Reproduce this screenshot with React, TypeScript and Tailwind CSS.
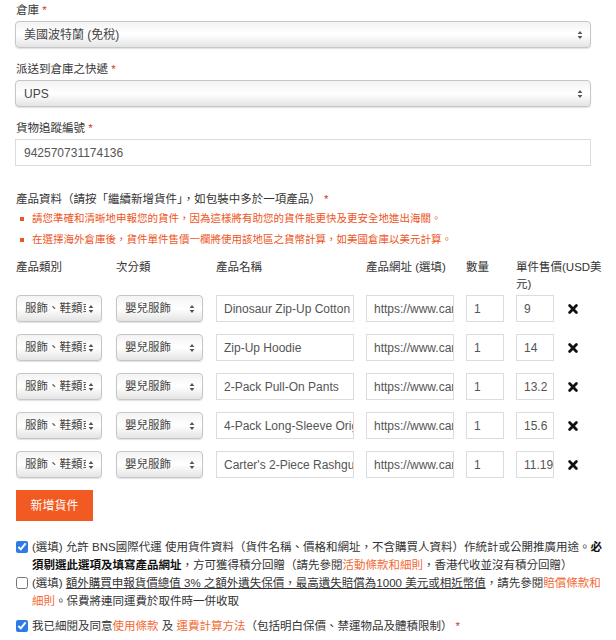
import React from "react";

const Arrows = () => (
  <svg width="6" height="10" viewBox="0 0 6 10" className="absolute right-[7px] top-1/2 -translate-y-1/2">
    <path d="M0.6 4 L3 1 L5.4 4 Z" fill="#555" />
    <path d="M0.6 6 L3 9 L5.4 6 Z" fill="#555" />
  </svg>
);

const Select = ({ text, className }: { text: string; className: string }) => (
  <div
    className={
      "relative h-[27px] rounded-[4px] border border-[#c6c6c6] bg-linear-to-b from-[#f3f3f3] via-white to-[#e4e4e4] shadow-[0_1px_1px_rgba(0,0,0,0.12)] flex items-center pl-[8px] text-[#444] " +
      className
    }
  >
    <span className="block overflow-hidden whitespace-nowrap">{text}</span>
    <Arrows />
  </div>
);

const Input = ({ value, className }: { value: string; className: string }) => (
  <div
    className={
      "h-[27px] border border-[#dcdcdc] bg-white flex items-center pl-[7px] text-[12px] text-[#555] overflow-hidden whitespace-nowrap " +
      className
    }
  >
    {value}
  </div>
);

const Star = () => <span className="text-[#d0392b]">*</span>;

const XIcon = () => (
  <svg width="12" height="12" viewBox="0 0 12 12">
    <path d="M2.6 2.6 L9.4 9.4 M9.4 2.6 L2.6 9.4" stroke="#111" strokeWidth="2.8" strokeLinecap="round" />
  </svg>
);

const rows = [
  ["Dinosaur Zip-Up Cotton Sleep & Play", "9"],
  ["Zip-Up Hoodie", "14"],
  ["2-Pack Pull-On Pants", "13.2"],
  ["4-Pack Long-Sleeve Original Bodysuits", "15.6"],
  ["Carter's 2-Piece Rashguard Set", "11.19"],
];

export default function App() {
  return (
    <div className="w-[616px] h-[640px] overflow-hidden bg-white pl-[15px] pt-[1px] font-['Liberation_Sans','Noto_Sans_CJK_TC',sans-serif] text-[#333] text-[11.5px]">
      <div className="w-[576px]">
        <div className="leading-[18px] mb-[2px] pl-[1px]">
          倉庫 <Star />
        </div>
        <Select text="美國波特蘭 (免稅)" className="w-full pr-[18px] text-[12px]" />

        <div className="leading-[18px] mb-[2px] mt-[12px] pl-[1px]">
          派送到倉庫之快遞 <Star />
        </div>
        <Select text="UPS" className="w-full pr-[18px] text-[12px]" />

        <div className="leading-[18px] mb-[2px] mt-[12px] pl-[1px]">
          貨物追蹤編號 <Star />
        </div>
        <Input value="942570731174136" className="w-full pl-[8px]" />
      </div>

      <div className="pl-[1px]">
        <div className="leading-[18px] mt-[24px]">
          產品資料（請按「繼續新增貨件」，如包裝中多於一項產品） <Star />
        </div>
        <div className="text-[#ee5525] leading-[21px] text-[10.5px]">
          <div className="flex items-center">
            <span className="w-[4px] h-[4px] bg-[#ee5525] ml-[4px] mr-[8px]" />
            請您準確和清晰地申報您的貨件，因為這樣將有助您的貨件能更快及更安全地進出海關。
          </div>
          <div className="flex items-center">
            <span className="w-[4px] h-[4px] bg-[#ee5525] ml-[4px] mr-[8px]" />
            在選擇海外倉庫後，貨件單件售價一欄將使用該地區之貨幣計算，如美國倉庫以美元計算。
          </div>
        </div>

        <div className="grid grid-cols-[100px_100px_150px_100px_50px_88px] items-start mt-[9px] leading-[17px]">
          <div>產品類別</div>
          <div>次分類</div>
          <div>產品名稱</div>
          <div>產品網址 (選填)</div>
          <div>數量</div>
          <div>單件售價(USD美元)</div>
        </div>

        <div className="mt-[2px] flex flex-col gap-[12px]">
          {rows.map(([name, price], i) => (
            <div key={i} className="grid grid-cols-[100px_100px_150px_100px_50px_50px_20px] items-center">
              <Select text="服飾、鞋類或配件" className="w-[86px] pr-[15px] text-[11.5px]" />
              <Select text="嬰兒服飾" className="w-[87px] pr-[15px] text-[11.5px]" />
              <Input value={name} className="w-[138px]" />
              <Input value="https://www.carters.com" className="w-[88px]" />
              <Input value="1" className="w-[38px]" />
              <Input value={price} className="w-[38px]" />
              <div className="pl-[1px] flex items-center">
                <XIcon />
              </div>
            </div>
          ))}
        </div>

        <button className="mt-[12px] h-[31px] w-[77px] bg-[#f15a22] text-white text-[12px] flex items-center justify-center">
          新增貨件
        </button>

        <div className="mt-[17px] leading-[18px]">
          <div className="flex items-start">
            <input type="checkbox" defaultChecked className="w-[12px] h-[12px] mt-[3px] accent-[#2d7be5] shrink-0" />
            <div className="ml-[4px] w-[572px]">
              (選填) 允許 BNS國際代運 使用貨件資料（貨件名稱、價格和網址，不含購買人資料）作統計或公開推廣用途。
              <b className="font-bold text-[#111]">必須剔選此選項及填寫產品網址</b>，方可獲得積分回贈（請先參閱
              <span className="text-[#f26a36]">活動條款和細則</span>，香港代收並沒有積分回贈）
            </div>
          </div>
          <div className="flex items-start">
            <input type="checkbox" className="w-[12px] h-[12px] mt-[3px] accent-[#2d7be5] shrink-0" />
            <div className="ml-[4px] w-[572px]">
              (選填) <span className="underline">額外購買申報貨價總值 3% 之額外遺失保價，最高遺失賠償為1000 美元或相近幣值</span>，請先參閱
              <span className="text-[#f26a36]">賠償條款和細則</span>。保費將連同運費於取件時一併收取
            </div>
          </div>
          <div className="flex items-start mt-[7px]">
            <input type="checkbox" defaultChecked className="w-[12px] h-[12px] mt-[3px] accent-[#2d7be5] shrink-0" />
            <div className="ml-[4px] w-[572px]">
              我已細閱及同意<span className="text-[#f26a36]">使用條款</span> 及 <span className="text-[#f26a36]">運費計算方法</span>（包括明白保價、禁運物品及體積限制） <Star />
            </div>
          </div>
        </div>
      </div>
    </div>
  );
}
